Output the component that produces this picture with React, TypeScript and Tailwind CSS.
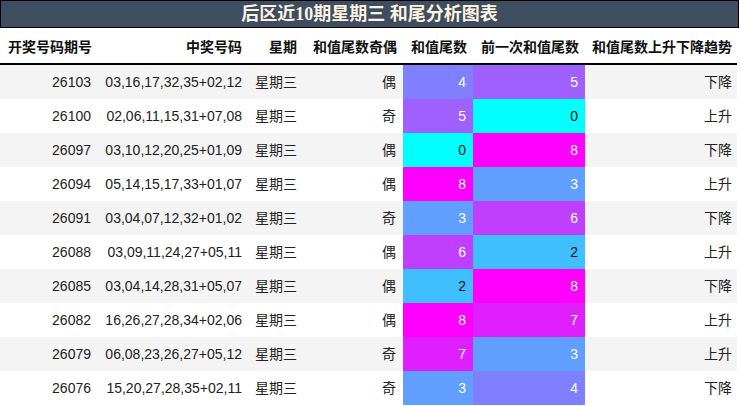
import React from "react";

type Row = {
  issue: string;
  nums: string;
  parity: string;
  cur: number;
  prev: number;
  trend: string;
};

const rows: Row[] = [
  { issue: "26103", nums: "03,16,17,32,35+02,12", parity: "偶", cur: 4, prev: 5, trend: "下降" },
  { issue: "26100", nums: "02,06,11,15,31+07,08", parity: "奇", cur: 5, prev: 0, trend: "上升" },
  { issue: "26097", nums: "03,10,12,20,25+01,09", parity: "偶", cur: 0, prev: 8, trend: "下降" },
  { issue: "26094", nums: "05,14,15,17,33+01,07", parity: "偶", cur: 8, prev: 3, trend: "上升" },
  { issue: "26091", nums: "03,04,07,12,32+01,02", parity: "奇", cur: 3, prev: 6, trend: "下降" },
  { issue: "26088", nums: "03,09,11,24,27+05,11", parity: "偶", cur: 6, prev: 2, trend: "上升" },
  { issue: "26085", nums: "03,04,14,28,31+05,07", parity: "偶", cur: 2, prev: 8, trend: "下降" },
  { issue: "26082", nums: "16,26,27,28,34+02,06", parity: "偶", cur: 8, prev: 7, trend: "上升" },
  { issue: "26079", nums: "06,08,23,26,27+05,12", parity: "奇", cur: 7, prev: 3, trend: "上升" },
  { issue: "26076", nums: "15,20,27,28,35+02,11", parity: "奇", cur: 3, prev: 4, trend: "下降" },
];

// cyan (0) -> magenta (8)
const cellColor = (n: number) => {
  const r = Math.min(255, n * 32);
  const g = Math.max(0, 255 - n * 32);
  return `rgb(${r},${g},255)`;
};

const cols = ["w-[98px]", "w-[150px]", "w-[55px]", "w-[100px]", "w-[70px]", "w-[112px]", "w-[152px]"];

const ValueCell: React.FC<{ n: number; width: string }> = ({ n, width }) => (
  <div
    className={`${width} h-full flex items-center justify-end pr-[7px] ${n <= 2 ? "text-[#111]" : "text-white"}`}
    style={{ backgroundColor: cellColor(n) }}
  >
    {n}
  </div>
);

export default function App() {
  const font = { fontFamily: '"Liberation Sans", "Noto Sans CJK SC", sans-serif' };
  return (
    <div className="w-[740px] h-[406px] bg-white" style={font}>
      <div
        className="w-[739px] h-[28px] bg-[#3f4d60] border border-black flex items-center justify-center text-[18px] font-bold text-[#fdf3e1]"
        style={{ fontFamily: '"Liberation Serif", "Noto Sans CJK SC", serif' }}
      >
        后区近10期星期三 和尾分析图表
      </div>
      <div className="w-[737px] h-[37px] pt-[3px] flex items-center border-b-2 border-black text-[14px] font-bold text-[#111]">
        <div className={`${cols[0]} pl-[8px]`}>开奖号码期号</div>
        <div className={`${cols[1]} text-right pr-[6px]`}>中奖号码</div>
        <div className={`${cols[2]} text-right pr-[6px]`}>星期</div>
        <div className={`${cols[3]} text-right pr-[6px]`}>和值尾数奇偶</div>
        <div className={`${cols[4]} text-right pr-[6px]`}>和值尾数</div>
        <div className={`${cols[5]} text-right pr-[6px]`}>前一次和值尾数</div>
        <div className={`${cols[6]} text-right pr-[5px]`}>和值尾数上升下降趋势</div>
      </div>
      {rows.map((r, i) => (
        <div
          key={r.issue}
          className={`w-[737px] h-[34px] flex items-center text-[14px] text-[#222] ${i % 2 === 0 ? "bg-[#f4f4f4]" : "bg-white"}`}
        >
          <div className={`${cols[0]} text-right pr-[7px]`}>{r.issue}</div>
          <div className={`${cols[1]} text-right pr-[6px]`}>{r.nums}</div>
          <div className={`${cols[2]} text-right pr-[6px]`}>星期三</div>
          <div className={`${cols[3]} text-right pr-[7px]`}>{r.parity}</div>
          <ValueCell n={r.cur} width={cols[4]} />
          <ValueCell n={r.prev} width={cols[5]} />
          <div className={`${cols[6]} text-right pr-[5px]`}>{r.trend}</div>
        </div>
      ))}
    </div>
  );
}
